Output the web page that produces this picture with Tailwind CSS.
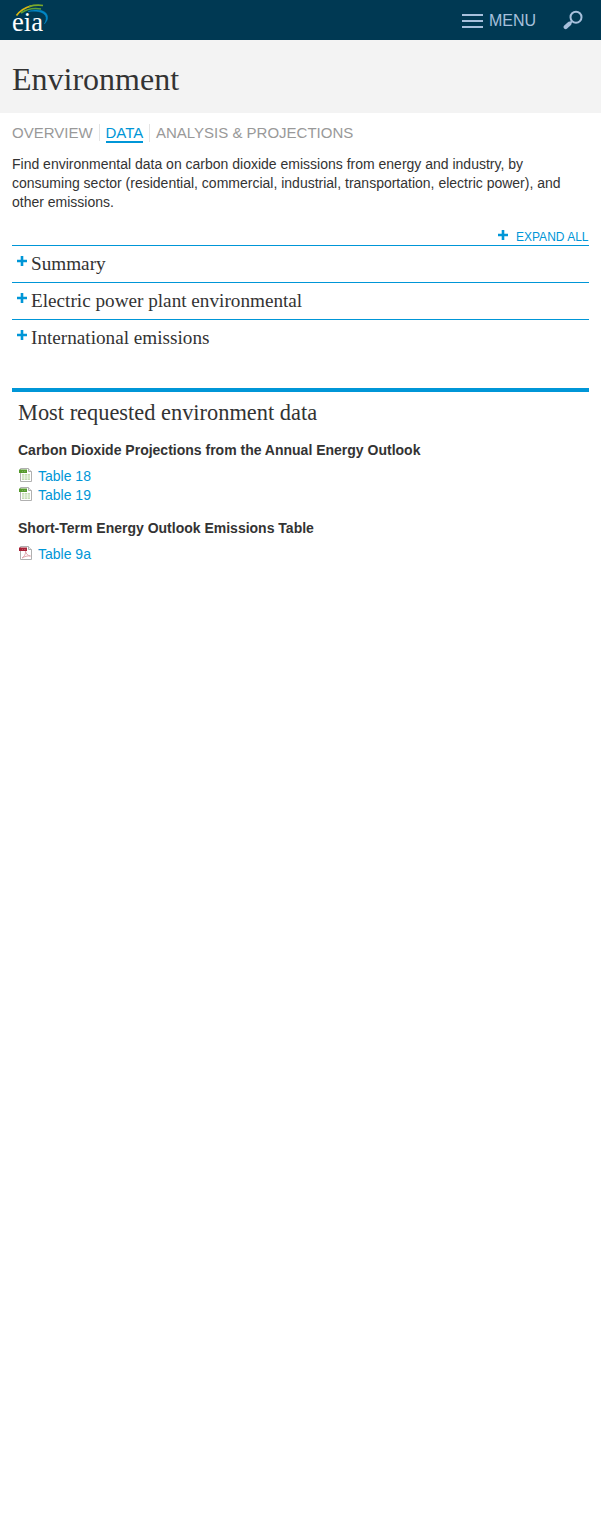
<!DOCTYPE html>
<html lang="en">
<head>
<meta charset="utf-8">
<title>Environment - Data</title>
<script src="https://cdn.jsdelivr.net/npm/@tailwindcss/browser@4"></script>
</head>
<body class="bg-white text-[#333] font-['Liberation_Sans',Arial,sans-serif] text-[14px] leading-[19px]">
<svg class="hidden">
  <symbol id="plus" viewBox="0 0 10 10"><path d="M3.700 0h2.600v3.700H10v2.600H6.300V10H3.700V6.300H0V3.700h3.700z" fill="#0096d7"/></symbol>
  <symbol id="sheet" viewBox="0 0 14 14"><path d="M1.500.5h8l3 3v10H1.500z" fill="#fff" stroke="#b0b0b0"/><path d="M9.500.5v3h3" fill="#eee" stroke="#b0b0b0"/><path d="M3 6h8v6H3z" fill="#c5dcb4"/><path d="M3 8h8M3 10h8M5.500 6v6M8.500 6v6" stroke="#f4faef" stroke-width=".7"/><path d="M0 1.500h8v3.500H0z" fill="#569a2e"/><path d="M3 3.500h1M5 3.500h1.500" stroke="#8dbb70" stroke-width=".7"/></symbol>
  <symbol id="pdf" viewBox="0 0 14 14"><path d="M1.500.5h8l3 3v10H1.500z" fill="#fff" stroke="#b0b0b0"/><path d="M9.500.5v3h3" fill="#eee" stroke="#b0b0b0"/><path d="M3 12c2-1 4-4 3.500-7 .5 3 2 4.500 5 5-3-.5-6 .5-8.500 2" fill="none" stroke="#dfa6ad" stroke-width="1"/><path d="M0 1.500h8v3.500H0z" fill="#a82237"/><path d="M3 3.500h1M5 3.500h1.500" stroke="#c8707e" stroke-width=".7"/></symbol>
</svg>
<header class="h-10 bg-[#003953] flex items-start justify-between pl-3 pr-[18px] text-[#a7c0dc]">
  <svg class="w-[38px] h-[36px]" viewBox="0 0 38 36">
    <path d="M4.500 15.500C9 9.500 13 7.500 19 6" fill="none" stroke="#d9b912" stroke-width="1.700"/>
    <path d="M17 6.600C22 5 26 4.800 31 5.500" fill="none" stroke="#7aa82c" stroke-width="1.700"/>
    <path d="M9 13C15 9 22 7.700 29 9" fill="none" stroke="#5b9f35" stroke-width="1.700"/>
    <path d="M16 11.500C26 8 36.500 10.500 35.500 18.500c-.3 2-1.500 3.800-3.200 5.500 1.800-3 2.500-6 1.200-8.300C31 11.500 24 10.500 16 11.500z" fill="#0087c6" stroke="#0087c6" stroke-width=".5"/>
    <text x="0" y="30.500" font-family="Liberation Serif" font-size="27" textLength="31" lengthAdjust="spacingAndGlyphs" fill="#fff">eia</text>
  </svg>
  <div class="flex">
    <svg class="w-[21px] h-[14px] mt-[14px]" viewBox="0 0 21 14"><path d="M0 1h21M0 7h21M0 13h21" stroke="#a7c0dc" stroke-width="2"/></svg>
    <span class="text-[16px] leading-10 ml-[6px] mt-px h-[39px] w-[47px]">MENU</span>
    <svg class="w-5 h-5 ml-[27px] mt-[10px]" viewBox="0 0 20 20"><circle cx="13" cy="7.200" r="5.500" fill="none" stroke="#a7c0dc" stroke-width="2"/><path d="M9 11.300L7 13.200" stroke="#a7c0dc" stroke-width="2"/><path d="M6.300 13.700L2.700 17" stroke="#a7c0dc" stroke-width="4.200" stroke-linecap="round"/></svg>
  </div>
</header>
<div class="h-[73px] bg-[#f3f3f3] px-3 pt-[19px]">
  <h1 class="font-['Liberation_Serif',serif] text-[32px] leading-[40px]">Environment</h1>
</div>
<nav class="px-3 pt-[11px] h-[42px] flex items-start text-[15px] leading-[17px] text-[#999]">
  <a class="w-[88px] h-[17px] border-r border-[#e5e5e5]">OVERVIEW</a>
  <a class="ml-[6px] w-[37px] h-[19px] whitespace-nowrap border-b-2 border-[#0096d7] text-[#0096d7]"><span class="-ml-[0.5px]">DATA</span></a>
  <a class="ml-[6px] h-[18px] pl-[6px] border-l border-[#e5e5e5]">ANALYSIS &amp; PROJECTIONS</a>
</nav>
<main class="px-3">
  <p class="w-[577px]">Find environmental data on carbon dioxide emissions from energy and industry, by<br>consuming sector (residential, commercial, industrial, transportation, electric power), and<br>other emissions.</p>
  <div class="h-[33px] pt-[17px] flex justify-end text-[12px] leading-[16px] text-[#0096d7]">
    <svg class="w-[10px] h-[10px] mr-2 mt-px"><use href="#plus"/></svg><span class="w-[73px] whitespace-nowrap">EXPAND ALL</span>
  </div>
  <ul class="font-['Liberation_Serif',serif] text-[19.2px] leading-[36px]">
    <li class="h-[37px] border-t border-[#0096d7] flex pl-[5px]"><svg class="w-[10px] h-[10px] mr-1 mt-[10px]"><use href="#plus"/></svg>Summary</li>
    <li class="h-[37px] border-t border-[#0096d7] flex pl-[5px]"><svg class="w-[10px] h-[10px] mr-1 mt-[10px]"><use href="#plus"/></svg>Electric power plant environmental</li>
    <li class="h-[37px] border-t border-[#0096d7] flex pl-[5px]"><svg class="w-[10px] h-[10px] mr-1 mt-[10px]"><use href="#plus"/></svg>International emissions</li>
  </ul>
  <section class="mt-[32px] border-t-4 border-[#0096d7] pl-[6px] pt-[8px]">
    <h2 class="font-['Liberation_Serif',serif] text-[22.4px] leading-[26px]">Most requested environment data</h2>
    <h3 class="font-bold mt-[15px]">Carbon Dioxide Projections from the Annual Energy Outlook</h3>
    <ul class="mt-[7px] text-[#0096d7]">
      <li class="flex h-[19px]"><svg class="w-[14px] h-[14px] ml-px mr-[5px] mt-px"><use href="#sheet"/></svg>Table 18</li>
      <li class="flex h-[19px]"><svg class="w-[14px] h-[14px] ml-px mr-[5px] mt-px"><use href="#sheet"/></svg>Table 19</li>
    </ul>
    <h3 class="font-bold mt-[14px]">Short-Term Energy Outlook Emissions Table</h3>
    <ul class="mt-[7px] text-[#0096d7]">
      <li class="flex h-[19px]"><svg class="w-[14px] h-[14px] ml-px mr-[5px] mt-px"><use href="#pdf"/></svg>Table 9a</li>
    </ul>
  </section>
</main>
</body>
</html>
